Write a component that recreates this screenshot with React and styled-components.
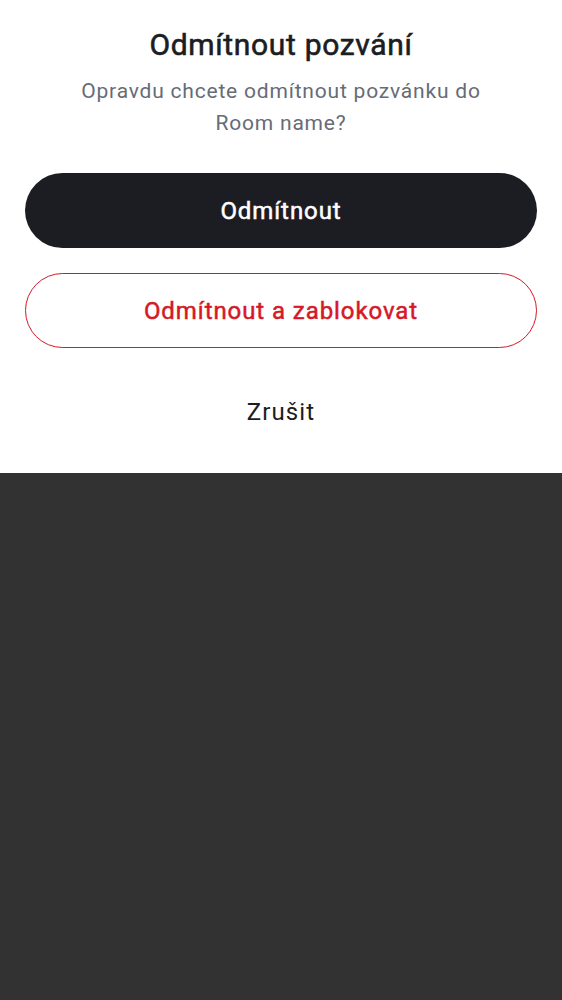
import React from "react";
import styled, { createGlobalStyle } from "styled-components";

const GlobalStyle = createGlobalStyle`
  html, body {
    margin: 0;
    padding: 0;
    background: #323232;
    font-family: Roboto, "Noto Sans", sans-serif;
  }
`;

const Sheet = styled.div`
  background: #ffffff;
  display: flex;
  flex-direction: column;
  align-items: center;
  padding: 26px 25px 0;
  height: 447px;
`;

// Roboto Medium isn't installed, so a thin stroke on the regular cut stands in for it
const Title = styled.h1`
  margin: 0;
  font-size: 30px;
  font-weight: 400;
  -webkit-text-stroke: 0.6px currentColor;
  letter-spacing: 0.67px;
  line-height: 38px;
  color: #1b1d22;
`;

const Message = styled.p`
  margin: 11px 0 0;
  max-width: 420px;
  text-align: center;
  font-size: 21px;
  letter-spacing: 0.8px;
  line-height: 32px;
  color: #656c77;
`;

const Actions = styled.div`
  width: 100%;
  display: flex;
  flex-direction: column;
  gap: 25px;
  margin-top: 34px;
`;

const Button = styled.button`
  width: 100%;
  height: 75px;
  border-radius: 38px;
  font-family: Roboto, "Noto Sans", sans-serif;
  font-size: 24px;
  font-weight: 400;
  -webkit-text-stroke: 0.5px currentColor;
  letter-spacing: 0.92px;
  cursor: pointer;
  background: ${(p) => (p.$danger ? "#ffffff" : "#1b1d22")};
  color: ${(p) => (p.$danger ? "#d51928" : "#ffffff")};
  border: ${(p) => (p.$danger ? "1.5px solid #d51928" : "none")};
`;

const Cancel = styled.button`
  margin-top: 26px;
  background: transparent;
  border: none;
  font-family: Roboto, "Noto Sans", sans-serif;
  font-size: 24px;
  font-weight: 400;
  letter-spacing: 1.1px;
  color: #1b1d22;
  height: 75px;
  cursor: pointer;
`;

const App = () => {
  return (
    <>
      <GlobalStyle />
      <Sheet>
        <Title>Odmítnout pozvání</Title>
        <Message>Opravdu chcete odmítnout pozvánku do Room name?</Message>
        <Actions>
          <Button>Odmítnout</Button>
          <Button $danger>Odmítnout a zablokovat</Button>
        </Actions>
        <Cancel>Zrušit</Cancel>
      </Sheet>
    </>
  );
};

export default App;
